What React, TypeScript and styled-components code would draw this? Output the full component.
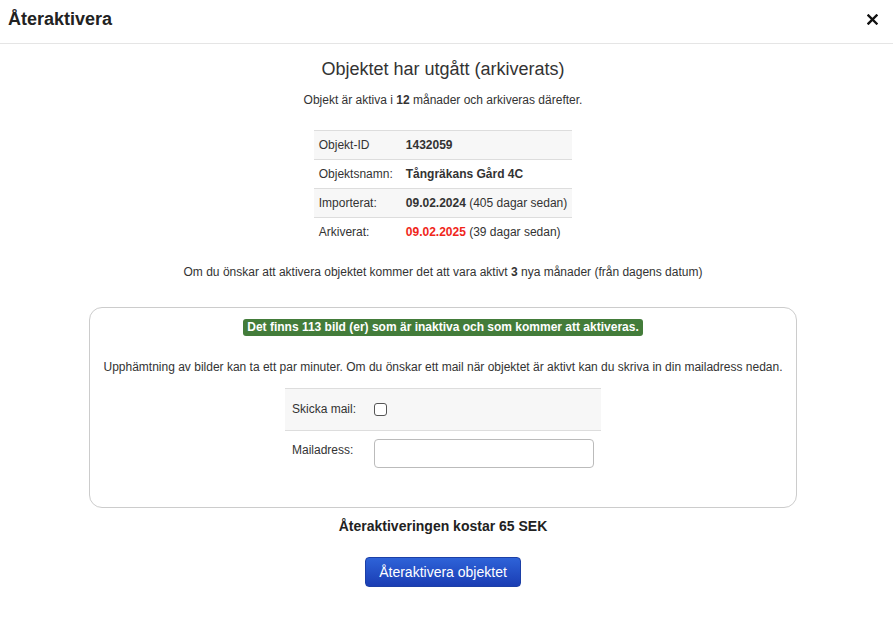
import React from "react";
import styled, { createGlobalStyle } from "styled-components";

const Global = createGlobalStyle`
  html, body { margin: 0; padding: 0; background: #fff; }
  body { font-family: "Liberation Sans", Arial, Helvetica, sans-serif; color: #333; }
  * { box-sizing: border-box; }
`;

const Modal = styled.div`
  width: 893px;
  height: 640px;
  background: #fff;
`;

const Header = styled.div`
  height: 44px;
  border-bottom: 1px solid #e5e5e5;
  display: flex;
  align-items: flex-start;
  justify-content: space-between;
  padding: 9px 14px 0 8px;
`;

const Title = styled.h4`
  margin: 0;
  font-size: 18px;
  line-height: 20px;
  font-weight: bold;
  color: #222;
`;

const Close = styled.button`
  border: 0;
  background: none;
  padding: 0;
  margin-top: 5px;
  width: 12px;
  height: 12px;
  display: flex;
  cursor: pointer;
`;

const Body = styled.div`
  padding: 0 7px 0 0;
  display: flex;
  flex-direction: column;
  align-items: center;
`;

const Heading = styled.h3`
  margin: 14px 0 0;
  font-size: 18px;
  line-height: 22px;
  font-weight: normal;
  color: #333;
`;

const Text = styled.p<{ $mt: number }>`
  margin: ${(p) => p.$mt}px 0 0;
  font-size: 12px;
  line-height: 16px;
  text-align: center;
`;

const InfoTable = styled.table`
  margin-top: 22px;
  border-collapse: collapse;
  font-size: 12px;
  line-height: 16px;
  tr:nth-child(odd) { background: #f7f7f7; }
  td {
    border-top: 1px solid #ddd;
    padding: 6px 5px;
    height: 29px;
    vertical-align: middle;
  }
  td:first-child { padding-right: 8px; }
`;

const Strong = styled.b<{ $red?: boolean }>`
  font-weight: bold;
  color: ${(p) => (p.$red ? "#f0261b" : "#333")};
`;

const Box = styled.div`
  margin-top: 27px;
  width: 80%;
  height: 201px;
  border: 1px solid #ccc;
  border-radius: 13px;
  display: flex;
  flex-direction: column;
  align-items: center;
  padding-top: 11px;
`;

const Badge = styled.span`
  display: inline-block;
  background: #437c3a;
  color: #fff;
  font-size: 12px;
  font-weight: bold;
  line-height: 13px;
  padding: 2px 4px;
  border-radius: 3px;
`;

const FormTable = styled.table`
  margin-top: 13px;
  border-collapse: collapse;
  font-size: 12px;
  line-height: 16px;
  width: 316px;
  td {
    padding: 0 7px;
    vertical-align: middle;
  }
  td:first-child { width: 88px; }
`;

const FormRow = styled.tr<{ $shade?: boolean; $h: number; $top?: string }>`
  background: ${(p) => (p.$shade ? "#f7f7f7" : "transparent")};
  border-top: 1px solid #ddd;
  height: ${(p) => p.$h}px;
  td { vertical-align: ${(p) => p.$top || "middle"}; }
`;

const Check = styled.input`
  margin: 0;
  width: 13px;
  height: 13px;
  appearance: none;
  border: 1px solid #555;
  border-radius: 3px;
  background: #fff;
  display: block;
`;

const MailInput = styled.input`
  width: 220px;
  height: 29px;
  border: 1px solid #bbb;
  border-radius: 4px;
  margin-top: 8px;
  display: block;
`;

const LabelTop = styled.span`
  display: block;
  margin-top: 11px;
`;

const Cost = styled.div`
  margin-top: 9px;
  font-size: 14px;
  font-weight: bold;
  line-height: 18px;
  color: #222;
`;

const ActionButton = styled.button`
  margin-top: 22px;
  width: 156px;
  height: 30px;
  border: 1px solid #1c3fa6;
  border-radius: 4px;
  background: linear-gradient(#2e63d8, #1a3db4);
  color: #fff;
  font-family: "Liberation Sans", Arial, sans-serif;
  font-size: 14px;
  cursor: pointer;
`;

export default function App() {
  return (
    <>
      <Global />
      <Modal>
        <Header>
          <Title>Återaktivera</Title>
          <Close aria-label="Stäng">
            <svg width="11" height="11" viewBox="0 0 11 11">
              <path d="M1.5 1.5 L9.5 9.5 M9.5 1.5 L1.5 9.5" stroke="#111" strokeWidth="2.4" strokeLinecap="square" />
            </svg>
          </Close>
        </Header>
        <Body>
          <Heading>Objektet har utgått (arkiverats)</Heading>
          <Text $mt={12}>
            Objekt är aktiva i <Strong>12</Strong> månader och arkiveras därefter.
          </Text>
          <InfoTable>
            <tbody>
              <tr>
                <td>Objekt-ID</td>
                <td><Strong>1432059</Strong></td>
              </tr>
              <tr>
                <td>Objektsnamn:</td>
                <td><Strong>Tångräkans Gård 4C</Strong></td>
              </tr>
              <tr>
                <td>Importerat:</td>
                <td><Strong>09.02.2024</Strong> (405 dagar sedan)</td>
              </tr>
              <tr>
                <td>Arkiverat:</td>
                <td><Strong $red>09.02.2025</Strong> (39 dagar sedan)</td>
              </tr>
            </tbody>
          </InfoTable>
          <Text $mt={17}>
            Om du önskar att aktivera objektet kommer det att vara aktivt <Strong>3</Strong> nya månader (från dagens datum)
          </Text>
          <Box>
            <Badge>Det finns 113 bild (er) som är inaktiva och som kommer att aktiveras.</Badge>
            <Text $mt={23}>
              Upphämtning av bilder kan ta ett par minuter. Om du önskar ett mail när objektet är aktivt kan du skriva in din mailadress nedan.
            </Text>
            <FormTable>
              <tbody>
                <FormRow $shade $h={42}>
                  <td>Skicka mail:</td>
                  <td><Check type="checkbox" /></td>
                </FormRow>
                <FormRow $h={46} $top="top">
                  <td><LabelTop>Mailadress:</LabelTop></td>
                  <td><MailInput type="text" /></td>
                </FormRow>
              </tbody>
            </FormTable>
          </Box>
          <Cost>Återaktiveringen kostar 65 SEK</Cost>
          <ActionButton>Återaktivera objektet</ActionButton>
        </Body>
      </Modal>
    </>
  );
}
